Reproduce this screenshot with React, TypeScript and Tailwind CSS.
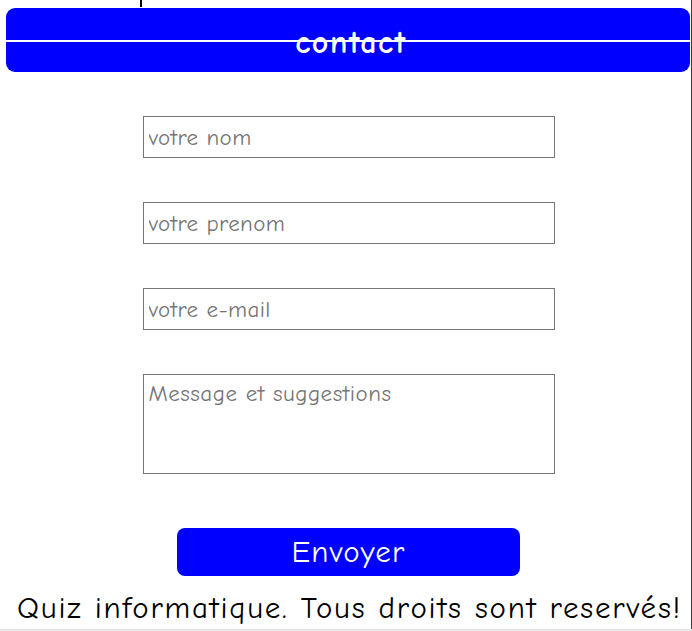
const font = "font-['Comic_Sans_MS','Comic_Neue','DejaVu_Sans',sans-serif]";

function Field({ placeholder }: { placeholder: string }) {
  return (
    <input
      type="text"
      placeholder={placeholder}
      className={`${font} block h-[42px] w-[412px] border border-[#767676] bg-white px-[5px] text-[23px] tracking-[0.4px] text-black outline-none placeholder:text-[#757575]`}
    />
  );
}

export default function App() {
  return (
    <div className="flex h-[631px] w-[692px] flex-col overflow-hidden bg-white">
      <div className="flex h-[629px] w-[692px] flex-col border-r border-[#3a3a3a]">
        {/* bout de texte coupé au-dessus */}
        <div className="h-2">
          <div className="ml-[140px] h-[7px] w-[2px] bg-black" />
        </div>

        <header className="mx-[6px] flex h-16 w-[684px] flex-col rounded-[9px] bg-[#0000ff]">
          <hr className="mt-[32px] h-[2px] border-0 bg-white" />
          <h1 className={`${font} -mt-[17px] flex h-[36px] items-center justify-center pl-[6px] text-[32px] font-bold tracking-[1.6px] text-white`}>
            contact
          </h1>
        </header>

        <form className="mt-[44px] flex flex-col items-center gap-[44px] pl-[6px]">
          <Field placeholder="votre nom" />
          <Field placeholder="votre prenom" />
          <Field placeholder="votre e-mail" />
          <textarea
            placeholder="Message et suggestions"
            className={`${font} block h-[100px] w-[412px] resize-none border border-[#767676] bg-white px-[5px] py-[2px] text-[23px] tracking-[0.5px] text-black outline-none placeholder:text-[#757575]`}
          />
          <button
            type="button"
            className={`${font} mt-[10px] h-12 w-[343px] rounded-lg bg-[#0000ff] text-[31px] tracking-[1.2px] text-white`}
          >
            Envoyer
          </button>
        </form>

        <p className={`${font} mt-[12px] pl-[17px] text-[31px] leading-[40px] tracking-[1.8px] whitespace-nowrap text-black`}>
          Quiz informatique. Tous droits sont reservés!
        </p>
      </div>
      <div className="h-[2px] w-full bg-[#e8e8e8]" />
    </div>
  );
}
